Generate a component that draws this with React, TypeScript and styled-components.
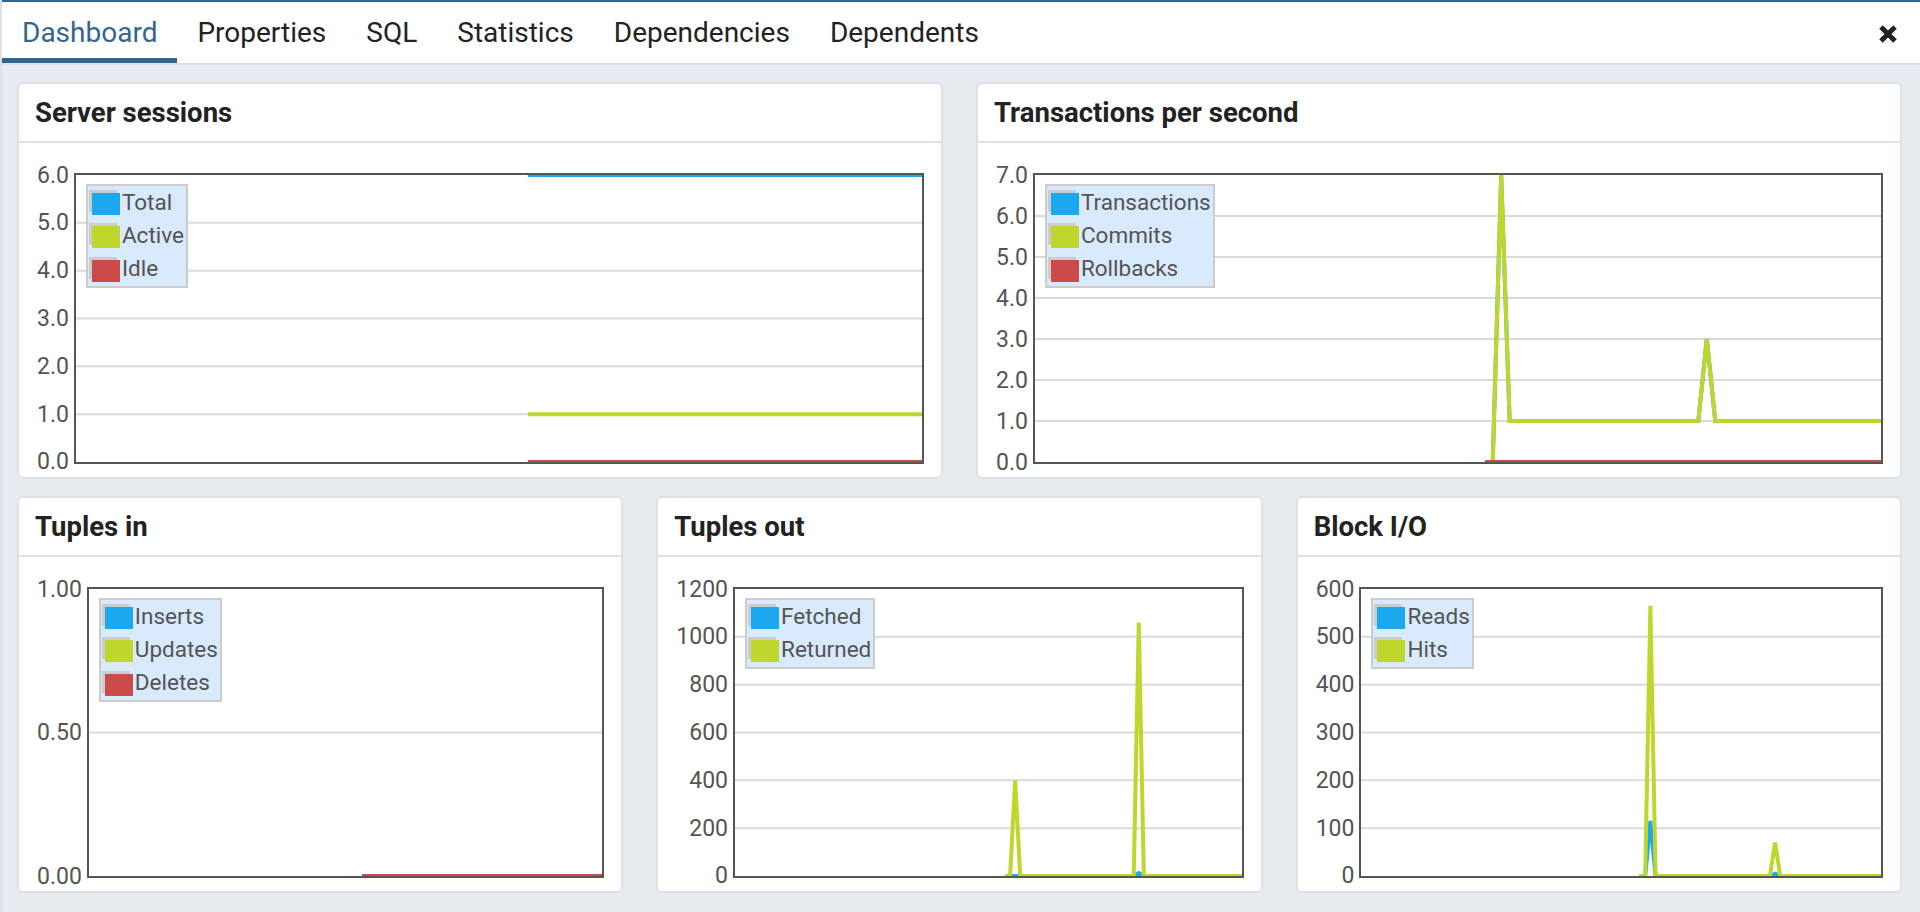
import React from 'react';
import styled, { createGlobalStyle } from 'styled-components';

const GlobalStyle = createGlobalStyle`
  html, body { margin: 0; padding: 0; }
  body { font-family: Roboto, "Liberation Sans", sans-serif; background: #e8ecf1; }
  * { box-sizing: border-box; }
`;

const BLUE = '#1ca8ee';
const GREEN = '#bfd62c';
const RED = '#cb4b4b';

const Page = styled.div`
  height: 912px;
  display: flex;
  flex-direction: column;
  border-left: 2px solid #dde1e7;
  background: #e8ecf1;
  overflow: hidden;
`;

const TabBar = styled.nav`
  flex: none;
  height: 65px;
  display: flex;
  align-items: stretch;
  background: #fff;
  border-top: 2px solid #326690;
  border-bottom: 2px solid #dde1e7;
`;

const Tab = styled.div<{ $active?: boolean }>`
  display: flex;
  align-items: center;
  padding: 0 20px;
  font-size: 28px;
  color: ${(p) => (p.$active ? '#326690' : '#222')};
  box-shadow: ${(p) => (p.$active ? 'inset 0 -5px 0 #326690' : 'none')};
  white-space: nowrap;
`;

const CloseButton = styled.div`
  margin-left: auto;
  display: flex;
  align-items: center;
  padding: 2px 22px 0 0;
  color: #222;
`;

const Content = styled.main`
  flex: 1;
  min-height: 0;
  display: flex;
  flex-direction: column;
  gap: 17px;
  padding: 17px 18px 19px 15px;
`;

const Row = styled.div`
  flex: 1;
  min-height: 0;
  display: flex;
  gap: 33px;
`;

const Card = styled.section`
  flex: 1;
  min-width: 0;
  display: flex;
  flex-direction: column;
  background: #fff;
  border: 2px solid #dde1e7;
  border-radius: 6px;
`;

const CardHeader = styled.h2`
  flex: none;
  margin: 0;
  height: 59px;
  display: flex;
  align-items: center;
  padding: 0 16px;
  border-bottom: 2px solid #dde1e7;
  font-size: 27.5px;
  font-weight: 700;
  color: #222;
`;

const CardBody = styled.div`
  flex: 1;
  min-height: 0;
  display: flex;
  padding: 30px 17px 13px 18px;
`;

const Axis = styled.div`
  flex: none;
  display: flex;
  flex-direction: column;
  justify-content: space-between;
  align-items: flex-end;
  padding: 2px 5px 2px 0;
  font-size: 23px;
  color: #545454;
`;

const Tick = styled.div`
  height: 0;
  display: flex;
  align-items: center;
  line-height: 1;
`;

const Plot = styled.div`
  flex: 1;
  min-width: 0;
  position: relative;
  display: flex;
  border: 2px solid #555;
  background: #fff;
`;

const PlotSvg = styled.svg`
  display: block;
  flex: 1;
  width: 100%;
  height: 100%;
`;

const Legend = styled.div`
  position: absolute;
  top: 9px;
  left: 10px;
  display: flex;
  flex-direction: column;
  padding: 0 2px 0 0;
  background: #d8eafc;
  border: 2px solid #ccc;
`;

const LegendItem = styled.div`
  height: 33.3px;
  display: flex;
  align-items: center;
  padding-bottom: 2px;
  font-size: 22.5px;
  color: #545454;
  white-space: nowrap;
`;

const Swatch = styled.span<{ $color: string }>`
  flex: none;
  width: 28px;
  height: 22px;
  margin: 5px 2px 0 4px;
  background: ${(p) => p.$color};
  box-shadow: -3px -3px 0 0 #ccc;
`;

type Point = [number, number];
type Series = { name: string; color: string; points: Point[] };

const flat = (v: number, start = 53.2): Point[] => [
  [start, v],
  [100, v],
];

type ChartProps = {
  title: string;
  max: number;
  labels: string[];
  series: Series[];
};

function Chart({ title, max, labels, series }: ChartProps) {
  const steps = labels.length - 1;
  const grid: number[] = [];
  for (let k = 1; k < steps; k++) grid.push((k / steps) * 1000);
  return (
    <Card>
      <CardHeader>{title}</CardHeader>
      <CardBody>
        <Axis>
          {labels.map((l) => (
            <Tick key={l}>{l}</Tick>
          ))}
        </Axis>
        <Plot>
          <PlotSvg viewBox="0 0 1000 1000" preserveAspectRatio="none">
            {grid.map((y) => (
              <line
                key={y}
                x1={0}
                x2={1000}
                y1={y}
                y2={y}
                stroke="#dadada"
                strokeWidth={2}
                vectorEffect="non-scaling-stroke"
              />
            ))}
            {series.map((s) => (
              <polyline
                key={s.name}
                fill="none"
                stroke={s.color}
                strokeWidth={4}
                vectorEffect="non-scaling-stroke"
                points={s.points.map(([x, v]) => `${x * 10},${(1 - v / max) * 1000}`).join(' ')}
              />
            ))}
          </PlotSvg>
          <Legend>
            {series.map((s) => (
              <LegendItem key={s.name}>
                <Swatch $color={s.color} />
                {s.name}
              </LegendItem>
            ))}
          </Legend>
        </Plot>
      </CardBody>
    </Card>
  );
}

const CloseIcon = () => (
  <svg width="20" height="20" viewBox="0 0 20 20">
    <path d="M3 3 L17 17 M17 3 L3 17" stroke="currentColor" strokeWidth="5" strokeLinecap="butt" fill="none" />
  </svg>
);

const tabs = ['Dashboard', 'Properties', 'SQL', 'Statistics', 'Dependencies', 'Dependents'];

const commits: Point[] = [
  [53.2, 0],
  [54.1, 0],
  [55.1, 7],
  [56.1, 1],
  [78.4, 1],
  [79.4, 3],
  [80.4, 1],
  [100, 1],
];

export default function App() {
  return (
    <>
      <GlobalStyle />
      <Page>
        <TabBar>
          {tabs.map((t, i) => (
            <Tab key={t} $active={i === 0}>
              {t}
            </Tab>
          ))}
          <CloseButton>
            <CloseIcon />
          </CloseButton>
        </TabBar>
        <Content>
          <Row>
            <Chart
              title="Server sessions"
              max={6}
              labels={['6.0', '5.0', '4.0', '3.0', '2.0', '1.0', '0.0']}
              series={[
                { name: 'Total', color: BLUE, points: flat(6, 53.4) },
                { name: 'Active', color: GREEN, points: flat(1, 53.4) },
                { name: 'Idle', color: RED, points: flat(0, 53.4) },
              ]}
            />
            <Chart
              title="Transactions per second"
              max={7}
              labels={['7.0', '6.0', '5.0', '4.0', '3.0', '2.0', '1.0', '0.0']}
              series={[
                { name: 'Transactions', color: BLUE, points: commits },
                { name: 'Commits', color: GREEN, points: commits },
                { name: 'Rollbacks', color: RED, points: flat(0) },
              ]}
            />
          </Row>
          <Row>
            <Chart
              title="Tuples in"
              max={1}
              labels={['1.00', '0.50', '0.00']}
              series={[
                { name: 'Inserts', color: BLUE, points: flat(0) },
                { name: 'Updates', color: GREEN, points: flat(0) },
                { name: 'Deletes', color: RED, points: flat(0) },
              ]}
            />
            <Chart
              title="Tuples out"
              max={1200}
              labels={['1200', '1000', '800', '600', '400', '200', '0']}
              series={[
                {
                  name: 'Fetched',
                  color: BLUE,
                  points: [
                    [53.3, 0],
                    [78.7, 0],
                    [79.7, 12],
                    [80.7, 0],
                    [100, 0],
                  ],
                },
                {
                  name: 'Returned',
                  color: GREEN,
                  points: [
                    [53.3, 0],
                    [54.3, 0],
                    [55.3, 400],
                    [56.3, 0],
                    [78.7, 0],
                    [79.7, 1060],
                    [80.7, 0],
                    [100, 0],
                  ],
                },
              ]}
            />
            <Chart
              title="Block I/O"
              max={600}
              labels={['600', '500', '400', '300', '200', '100', '0']}
              series={[
                {
                  name: 'Reads',
                  color: BLUE,
                  points: [
                    [53.6, 0],
                    [54.7, 0],
                    [55.7, 115],
                    [56.7, 0],
                    [78.7, 0],
                    [79.7, 5],
                    [80.7, 0],
                    [100, 0],
                  ],
                },
                {
                  name: 'Hits',
                  color: GREEN,
                  points: [
                    [53.6, 0],
                    [54.7, 0],
                    [55.7, 565],
                    [56.7, 0],
                    [78.7, 0],
                    [79.7, 70],
                    [80.7, 0],
                    [100, 0],
                  ],
                },
              ]}
            />
          </Row>
        </Content>
      </Page>
    </>
  );
}
